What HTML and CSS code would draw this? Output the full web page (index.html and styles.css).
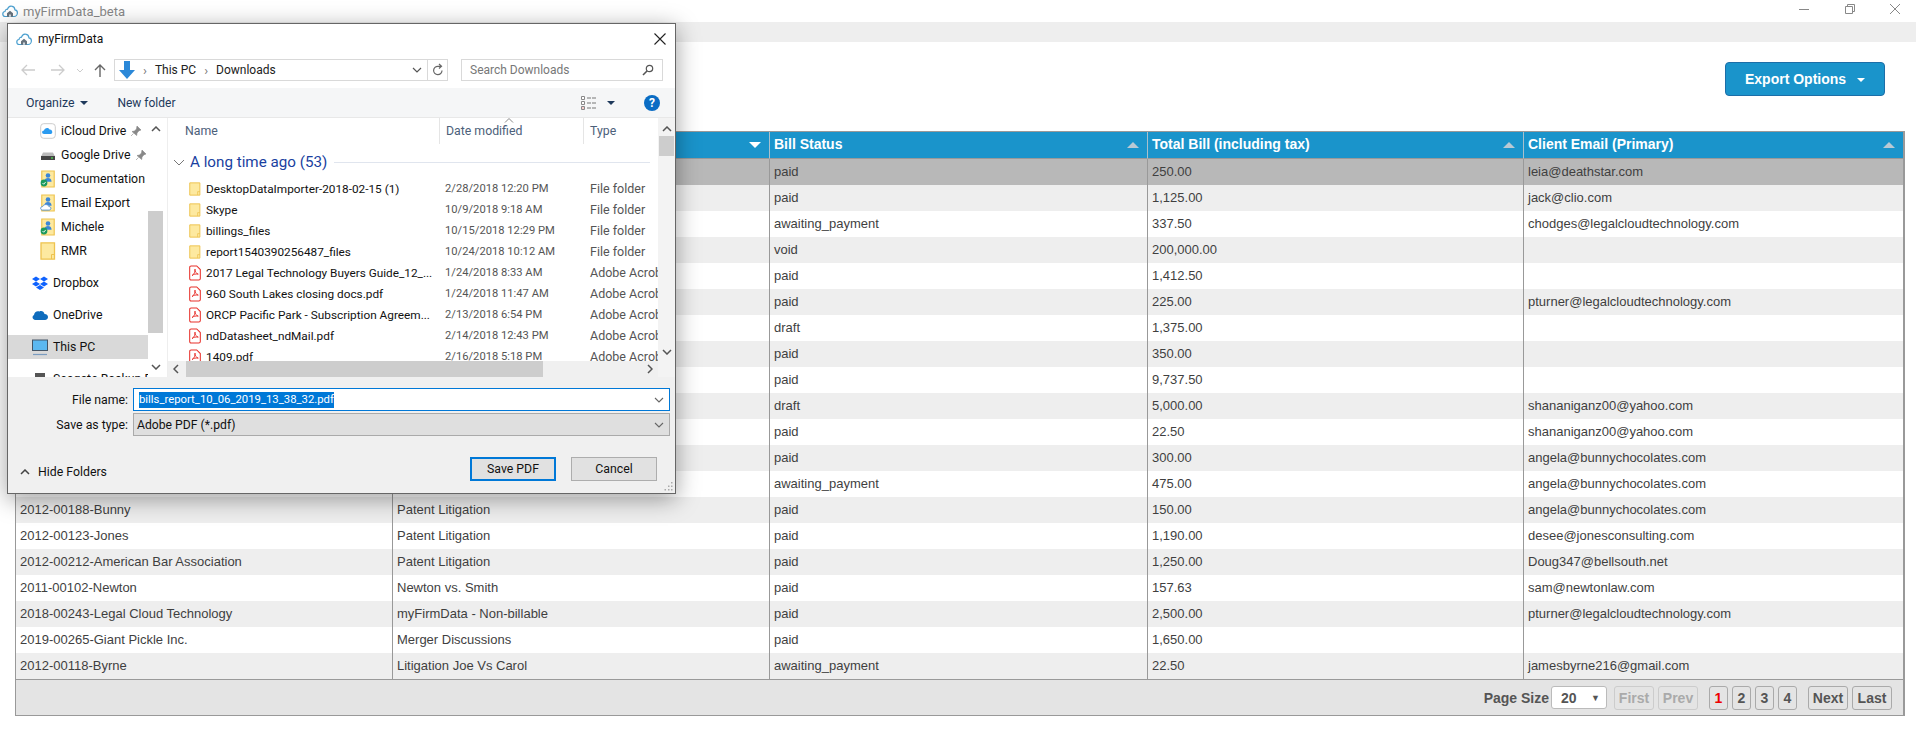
FILE: index.html
```html
<!DOCTYPE html>
<html lang="en">
<head>
<meta charset="utf-8">
<title>myFirmData_beta</title>
<link rel="stylesheet" href="styles.css">
</head>
<body>
<svg class="defs" width="0" height="0" aria-hidden="true">
  <symbol id="cloud" viewBox="0 0 16 16"><path d="M4 13.500H3.200C1.600 13.500.8 12.300.8 11s.9-2.400 2.200-2.500C3.300 6.800 4.400 6 5.500 6.200 6.200 3.900 8 2.800 9.600 3.100c2 .3 3.200 1.900 3.300 3.700 1.500.2 2.500 1.400 2.500 2.900 0 1.900-1.300 3.800-3.400 3.800H4" fill="#fff" stroke="#4a9fcf" stroke-width="1.200"/><path d="M5 10.200 8 7.800l3 2.400v3.600H5z" fill="#67727c"/><path d="M7 11.500h2v2.300H7z" fill="#cfd6dc"/></symbol>
  <symbol id="folder" viewBox="0 0 16 18"><path d="M1 .8h13.500v16.400H1z" fill="#fde9a0" stroke="#eec34f" stroke-width="1.300"/><path d="M11.500 17V12.500h3" fill="none" stroke="#eec34f"/></symbol>
  <symbol id="pdf" viewBox="0 0 14 18"><path d="M.8 2.500Q.8.800 2.500.8H9L13.200 5v10.500q0 1.700-1.700 1.700h-9q-1.700 0-1.700-1.700z" fill="#fff" stroke="#e8302a" stroke-width="1.200"/><path d="M7 4.500c-.8 2.500 1.500 5 3.800 5.800M7 4.500c.6 2.800-1 6-3.500 7.500M3.500 12c2-1.800 4.500-2 7.300-1.700" fill="none" stroke="#e8302a" stroke-width="1.100"/></symbol>
  <symbol id="sharedfolder" viewBox="0 0 18 20"><path d="M2 1h14v18H2z" fill="#fde9a0" stroke="#eec34f" stroke-width="1.300"/><circle cx="9" cy="6" r="2.600" fill="#3b86d8"/><path d="M5 13c0-3 2-4 4-4s4 1 4 4z" fill="#3b86d8"/><circle cx="4.500" cy="14.500" r="3.800" fill="#1c9a5e"/><path d="M2.800 14.500l1.400 1.400 2.200-2.600" fill="none" stroke="#fff"/></symbol>
  <symbol id="sharedcloud" viewBox="0 0 18 20"><path d="M2 1h14v18H2z" fill="#fde9a0" stroke="#eec34f" stroke-width="1.300"/><circle cx="9" cy="6" r="2.600" fill="#3b86d8"/><path d="M5 13c0-3 2-4 4-4s4 1 4 4z" fill="#3b86d8"/><path d="M3 18c-3 0-3-4 0-4 1-3 6-3 7 0 3 0 3 4 0 4z" fill="#fff" stroke="#4a8bd0"/></symbol>
</svg>

<header class="titlebar">
  <svg class="ic-16"><use href="#cloud"/></svg>
  <span class="apptitle">myFirmData_beta</span>
  <span class="winctl">
    <svg width="12" height="12" viewBox="0 0 12 12"><path d="M1 6.500h10" stroke="#888"/></svg>
    <svg width="12" height="12" viewBox="0 0 12 12"><path d="M1.500 3.500h7v7h-7zM3.500 3.500v-2h7v7h-2" fill="none" stroke="#888"/></svg>
    <svg width="12" height="12" viewBox="0 0 12 12"><path d="M1 1l10 10M11 1L1 11" stroke="#888"/></svg>
  </span>
</header>
<div class="menubar"></div>

<main class="page">
  <div class="actions">
    <button class="export">Export Options <span class="caret"></span></button>
  </div>

  <section class="grid-wrap">
    <table class="grid">
      <thead>
        <tr>
          <th>Matter</th>
          <th class="sorted">Matter Description</th>
          <th>Bill Status</th>
          <th>Total Bill (including tax)</th>
          <th>Client Email (Primary)</th>
        </tr>
      </thead>
      <tbody>
        <tr class="selected"><td></td><td></td><td>paid</td><td>250.00</td><td>leia@deathstar.com</td></tr>
        <tr><td></td><td></td><td>paid</td><td>1,125.00</td><td>jack@clio.com</td></tr>
        <tr><td></td><td></td><td>awaiting_payment</td><td>337.50</td><td>chodges@legalcloudtechnology.com</td></tr>
        <tr><td></td><td></td><td>void</td><td>200,000.00</td><td></td></tr>
        <tr><td></td><td></td><td>paid</td><td>1,412.50</td><td></td></tr>
        <tr><td></td><td></td><td>paid</td><td>225.00</td><td>pturner@legalcloudtechnology.com</td></tr>
        <tr><td></td><td></td><td>draft</td><td>1,375.00</td><td></td></tr>
        <tr><td></td><td></td><td>paid</td><td>350.00</td><td></td></tr>
        <tr><td></td><td></td><td>paid</td><td>9,737.50</td><td></td></tr>
        <tr><td></td><td></td><td>draft</td><td>5,000.00</td><td>shananiganz00@yahoo.com</td></tr>
        <tr><td></td><td></td><td>paid</td><td>22.50</td><td>shananiganz00@yahoo.com</td></tr>
        <tr><td></td><td></td><td>paid</td><td>300.00</td><td>angela@bunnychocolates.com</td></tr>
        <tr><td></td><td></td><td>awaiting_payment</td><td>475.00</td><td>angela@bunnychocolates.com</td></tr>
        <tr><td>2012-00188-Bunny</td><td>Patent Litigation</td><td>paid</td><td>150.00</td><td>angela@bunnychocolates.com</td></tr>
        <tr><td>2012-00123-Jones</td><td>Patent Litigation</td><td>paid</td><td>1,190.00</td><td>desee@jonesconsulting.com</td></tr>
        <tr><td>2012-00212-American Bar Association</td><td>Patent Litigation</td><td>paid</td><td>1,250.00</td><td>Doug347@bellsouth.net</td></tr>
        <tr><td>2011-00102-Newton</td><td>Newton vs. Smith</td><td>paid</td><td>157.63</td><td>sam@newtonlaw.com</td></tr>
        <tr><td>2018-00243-Legal Cloud Technology</td><td>myFirmData - Non-billable</td><td>paid</td><td>2,500.00</td><td>pturner@legalcloudtechnology.com</td></tr>
        <tr><td>2019-00265-Giant Pickle Inc.</td><td>Merger Discussions</td><td>paid</td><td>1,650.00</td><td></td></tr>
        <tr><td>2012-00118-Byrne</td><td>Litigation Joe Vs Carol</td><td>awaiting_payment</td><td>22.50</td><td>jamesbyrne216@gmail.com</td></tr>
      </tbody>
    </table>
    <footer class="pager">
      <span class="pager-label">Page Size</span>
      <span class="pager-select">20 <i class="pager-arrow">▼</i></span>
      <span class="pgroup">
        <span class="pbtn wide off">First</span>
        <span class="pbtn wide off">Prev</span>
      </span>
      <span class="pgroup">
        <span class="pbtn num cur">1</span>
        <span class="pbtn num">2</span>
        <span class="pbtn num">3</span>
        <span class="pbtn num">4</span>
      </span>
      <span class="pgroup">
        <span class="pbtn wide">Next</span>
        <span class="pbtn wide">Last</span>
      </span>
    </footer>
  </section>
</main>

<div class="dialog">
  <div class="dlg-title">
    <svg class="ic-16"><use href="#cloud"/></svg>
    <span class="dlg-name">myFirmData</span>
    <svg class="dlg-close" width="12" height="12" viewBox="0 0 12 12"><path d="M.5.500l11 11M11.500.500l-11 11" stroke="#222" stroke-width="1.100"/></svg>
  </div>

  <div class="dlg-nav">
    <svg class="navarrows" width="88" height="14" viewBox="0 0 88 14">
      <path d="M15 7H2M7 2 2 7l5 5" fill="none" stroke="#ccc" stroke-width="1.300"/>
      <path d="M31 7h13M39 2l5 5-5 5" fill="none" stroke="#ccc" stroke-width="1.300"/>
      <path d="M57 6l3 3 3-3" fill="none" stroke="#ccc"/>
      <path d="M80 14V2M75 7l5-5 5 5" fill="none" stroke="#666" stroke-width="1.400"/>
    </svg>
    <div class="addr">
      <svg class="addr-ic" width="16" height="20" viewBox="0 0 16 20"><path d="M5 1h6v9h5l-8 9-8-9h5z" fill="#2b88d8"/></svg>
      <span class="crumbsep">›</span><span class="crumb">This PC</span><span class="crumbsep">›</span><span class="crumb">Downloads</span>
      <span class="addr-fill"></span>
      <svg class="addr-chev" width="10" height="6" viewBox="0 0 10 6"><path d="M1 1l4 4 4-4" fill="none" stroke="#555" stroke-width="1.200"/></svg>
      <span class="addr-refresh"><svg width="12" height="14" viewBox="0 0 12 14"><path d="M10 7.500A4.200 4.200 0 1 1 6 3.300H9M7 1l2.500 2.300L7 5.500" fill="none" stroke="#666" stroke-width="1.200"/></svg></span>
    </div>
    <div class="search">
      <span>Search Downloads</span>
      <svg width="12" height="12" viewBox="0 0 12 12"><circle cx="7.500" cy="4.500" r="3.200" fill="none" stroke="#555" stroke-width="1.200"/><path d="M5 7l-4 4" stroke="#555" stroke-width="1.600"/></svg>
    </div>
  </div>

  <div class="dlg-tools">
    <span class="tool">Organize <i class="tcaret"></i></span>
    <span class="tool newf">New folder</span>
    <span class="tool-fill"></span>
    <svg width="18" height="16" viewBox="0 0 18 16"><path d="M1.500 1.500h3v3h-3zM1.500 6.500h3v3h-3zM1.500 11.500h3v3h-3z" fill="#fff" stroke="#888"/><path d="M2.500 12.500h1v1h-1z" fill="#d33"/><path d="M7 3h4M12 3h4M7 8h4M12 8h4M7 13h4M12 13h4" stroke="#777"/></svg>
    <i class="tcaret view"></i>
    <span class="help">?</span>
  </div>

  <div class="dlg-main">
    <nav class="navpane">
      <div class="navlist">
        <div class="nav l2"><svg class="ni" viewBox="0 0 16 16"><rect x=".7" y=".7" width="14.600" height="14.600" rx="3" fill="#fff" stroke="#ccc"/><path d="M4 11c-2.500 0-2.500-3.300 0-3.400C4.500 5 8 4 9.500 6.500c2.500-.5 4 3.500 1.500 4.500z" fill="#2b9bf0"/></svg><span>iCloud Drive</span><svg class="pin" width="12" height="12" viewBox="0 0 12 12"><path d="M7 1l4 4-2 .7-2 2.300-.3 2.500L2 6.500l2.500-.4L6.500 4z M3.500 8.500L1 11" fill="#888" stroke="#888" stroke-width=".6"/></svg></div>
        <div class="nav l2"><svg class="ni" viewBox="0 0 16 16"><path d="M3 5.500h10l2 4H1z" fill="#bbb"/><rect x="1" y="9" width="14" height="4" fill="#444"/><rect x="11" y="10.500" width="2" height="1" fill="#5f5"/></svg><span>Google Drive</span><svg class="pin" width="12" height="12" viewBox="0 0 12 12"><path d="M7 1l4 4-2 .7-2 2.300-.3 2.500L2 6.500l2.500-.4L6.500 4z M3.500 8.500L1 11" fill="#888" stroke="#888" stroke-width=".6"/></svg></div>
        <div class="nav l2"><svg class="ni"><use href="#sharedfolder"/></svg><span>Documentation</span></div>
        <div class="nav l2"><svg class="ni"><use href="#sharedcloud"/></svg><span>Email Export</span></div>
        <div class="nav l2"><svg class="ni"><use href="#sharedfolder"/></svg><span>Michele</span></div>
        <div class="nav l2"><svg class="ni"><use href="#folder"/></svg><span>RMR</span></div>
        <div class="nav l1 gap"><svg class="ni" viewBox="0 0 16 16"><path d="M4 1.500 8 4 4 6.500 0 4zM12 1.500 16 4l-4 2.500L8 4zM4 6.500 8 9l-4 2.500L0 9zM12 6.500 16 9l-4 2.500L8 9zM8 10l4 2.500L8 15l-4-2.500z" fill="#0f62fe"/></svg><span>Dropbox</span></div>
        <div class="nav l1 gap"><svg class="ni" viewBox="0 0 16 16"><path d="M3.500 13C.5 13-.6 9.500 2 8c.3-3 3-4.500 5.500-3.500 2-1 4.500 0 5 2.500 2.500 0 3.500 1.500 3.500 3 0 1.600-1.200 3-3 3z" fill="#0f6cbd"/></svg><span>OneDrive</span></div>
        <div class="nav l1 gap active"><svg class="ni" viewBox="0 0 16 16"><rect x=".5" y="1" width="15" height="10.500" fill="#5cb8f0" stroke="#456"/><path d="M1 15.500h14" stroke="#7a9cc0" stroke-width="1.200"/></svg><span>This PC</span></div>
        <div class="nav l1 gap"><svg class="ni" viewBox="0 0 16 16"><path d="M3 2h10v12H3z" fill="#555"/></svg><span>Seagate Backup P</span></div>
      </div>
      <div class="vbar">
        <svg class="sb-a" width="10" height="6" viewBox="0 0 10 6"><path d="M1 5l4-4 4 4" fill="none" stroke="#555" stroke-width="1.500"/></svg>
        <span class="nthumb"></span>
        <svg class="sb-a sb-end" width="10" height="6" viewBox="0 0 10 6"><path d="M1 1l4 4 4-4" fill="none" stroke="#555" stroke-width="1.500"/></svg>
      </div>
    </nav>
    <div class="paneline"></div>
    <div class="listpane">
      <div class="listarea">
        <div class="listbody">
          <div class="lhead">
            <span class="lh-name">Name</span>
            <span class="lh-date">Date modified<svg class="lh-sort" width="10" height="5" viewBox="0 0 10 5"><path d="M1 4.500l4-4 4 4" fill="none" stroke="#888"/></svg></span>
            <span class="lh-type">Type</span>
          </div>
          <div class="lgroup">
            <svg width="12" height="7" viewBox="0 0 12 7"><path d="M1 1l5 5 5-5" fill="none" stroke="#777"/></svg>
            <span class="lgroup-t">A long time ago (53)</span>
            <span class="lgroup-l"></span>
          </div>
          <div class="lrow"><svg class="fi"><use href="#folder"/></svg><span class="lname">DesktopDataImporter-2018-02-15 (1)</span><span class="ldate">2/28/2018 12:20 PM</span><span class="ltype">File folder</span></div>
          <div class="lrow"><svg class="fi"><use href="#folder"/></svg><span class="lname">Skype</span><span class="ldate">10/9/2018 9:18 AM</span><span class="ltype">File folder</span></div>
          <div class="lrow"><svg class="fi"><use href="#folder"/></svg><span class="lname">billings_files</span><span class="ldate">10/15/2018 12:29 PM</span><span class="ltype">File folder</span></div>
          <div class="lrow"><svg class="fi"><use href="#folder"/></svg><span class="lname">report1540390256487_files</span><span class="ldate">10/24/2018 10:12 AM</span><span class="ltype">File folder</span></div>
          <div class="lrow"><svg class="fi"><use href="#pdf"/></svg><span class="lname">2017 Legal Technology Buyers Guide_12_...</span><span class="ldate">1/24/2018 8:33 AM</span><span class="ltype">Adobe Acrobat</span></div>
          <div class="lrow"><svg class="fi"><use href="#pdf"/></svg><span class="lname">960 South Lakes closing docs.pdf</span><span class="ldate">1/24/2018 11:47 AM</span><span class="ltype">Adobe Acrobat</span></div>
          <div class="lrow"><svg class="fi"><use href="#pdf"/></svg><span class="lname">ORCP Pacific Park - Subscription Agreem...</span><span class="ldate">2/13/2018 6:54 PM</span><span class="ltype">Adobe Acrobat</span></div>
          <div class="lrow"><svg class="fi"><use href="#pdf"/></svg><span class="lname">ndDatasheet_ndMail.pdf</span><span class="ldate">2/14/2018 12:43 PM</span><span class="ltype">Adobe Acrobat</span></div>
          <div class="lrow"><svg class="fi"><use href="#pdf"/></svg><span class="lname">1409.pdf</span><span class="ldate">2/16/2018 5:18 PM</span><span class="ltype">Adobe Acrobat</span></div>
        </div>
        <div class="hbar">
          <svg width="6" height="10" viewBox="0 0 6 10"><path d="M5 1 1 5l4 4" fill="none" stroke="#555" stroke-width="1.500"/></svg>
          <span class="hthumb"></span>
          <svg class="sb-end-h" width="6" height="10" viewBox="0 0 6 10"><path d="M1 1l4 4-4 4" fill="none" stroke="#555" stroke-width="1.500"/></svg>
        </div>
      </div>
      <div class="vbar lv">
        <svg class="sb-a" width="10" height="6" viewBox="0 0 10 6"><path d="M1 5l4-4 4 4" fill="none" stroke="#555" stroke-width="1.500"/></svg>
        <span class="lthumb"></span>
        <svg class="sb-a sb-end" width="10" height="6" viewBox="0 0 10 6"><path d="M1 1l4 4 4-4" fill="none" stroke="#555" stroke-width="1.500"/></svg>
      </div>
    </div>
  </div>

  <div class="dlg-form">
    <div class="frow">
      <label class="flabel">File name:</label>
      <div class="finput"><span class="fsel">bills_report_10_06_2019_13_38_32.pdf</span><svg class="fchev" width="10" height="6" viewBox="0 0 10 6"><path d="M1 1l4 4 4-4" fill="none" stroke="#666" stroke-width="1.100"/></svg></div>
    </div>
    <div class="frow">
      <label class="flabel">Save as type:</label>
      <div class="fselect"><span>Adobe PDF (*.pdf)</span><svg class="fchev" width="10" height="6" viewBox="0 0 10 6"><path d="M1 1l4 4 4-4" fill="none" stroke="#666" stroke-width="1.100"/></svg></div>
    </div>
    <div class="fbuttons">
      <span class="hide"><svg width="10" height="6" viewBox="0 0 10 6"><path d="M1 5l4-4 4 4" fill="none" stroke="#444" stroke-width="1.500"/></svg>Hide Folders</span>
      <button class="wbtn primary">Save PDF</button>
      <button class="wbtn">Cancel</button>
    </div>
    <svg class="grip" width="10" height="10" viewBox="0 0 10 10"><path d="M8 1h1.500v1.500H8zM5 4.500h1.500V6H5zM8 4.500h1.500V6H8zM1.500 8H3v1.500H1.500zM5 8h1.500v1.500H5zM8 8h1.500v1.500H8z" fill="#aaa"/></svg>
  </div>
</div>
</body>
</html>
```
FILE: styles.css
```css
* { box-sizing: border-box; }
html, body { margin: 0; padding: 0; }
body { height: 731px; overflow: hidden; background: #fff; font-family: "Liberation Sans", Arial, sans-serif; position: relative; }
.defs { position: absolute; }
.ic-16 { width: 16px; height: 16px; flex: none; }

.titlebar { height: 22px; display: flex; align-items: center; padding-left: 2px; font-family: Roboto, "Noto Sans", sans-serif; }
.apptitle { font-size: 13px; color: #888; margin-left: 5px; }
.winctl { margin-left: auto; display: flex; gap: 33.500px; padding-right: 15px; padding-bottom: 4px; }
.menubar { height: 20px; background: #eee; }

.page { padding: 0 11px 0 15px; }
.actions { height: 89px; display: flex; justify-content: flex-end; align-items: flex-start; padding: 20px 20px 0 0; }
.export { width: 160px; height: 34px; border: 1px solid #1c6ea8; border-radius: 4px; background: #1a94cb; color: #fff; font: bold 14px "Liberation Sans", Arial, sans-serif; padding: 0; }
.caret { display: inline-block; width: 0; height: 0; border: 4px solid transparent; border-top-color: #fff; border-bottom: 0; margin-left: 7px; vertical-align: 2px; }

.grid-wrap { width: 100%; }
.grid { width: 100%; height: 548px; border-collapse: separate; border-spacing: 0; table-layout: fixed; border: solid #999; border-width: 1px 2px 0 1px; font-size: 13px; color: #3f3f3f; }
.grid th { height: 27px; background: #1a94cb; color: #fff; font-weight: bold; font-size: 14px; text-align: left; padding: 0 30px 2px 4px; border-right: 1px solid #a9c0cc; border-bottom: 1px solid #999; position: relative; }
.grid th:nth-child(1), .grid th:nth-child(2) { width: 377px; }
.grid th:nth-child(3) { width: 378px; }
.grid th:nth-child(4) { width: 376px; }
.grid th:last-child, .grid td:last-child { border-right: 0; }
.grid th::after { content: ""; position: absolute; right: 8px; top: 10px; border: 6px solid transparent; border-bottom: 6px solid #b9c9d4; border-top: 0; }
.grid th.sorted::after { border-bottom: 0; border-top: 6px solid #fff; }
.grid td { height: 26px; padding: 0 4px 2px; border-right: 1px solid #999; white-space: nowrap; overflow: hidden; }
.grid tbody tr:nth-child(even) { background: #eee; }
.grid tbody tr.selected { background: #b8b8b8; }
.pager { height: 37px; background: #e4e4e4; border: solid #999; border-width: 1px 2px 1px 1px; display: flex; align-items: center; justify-content: flex-end; padding-right: 11px; font-weight: bold; font-size: 14px; color: #555; }
.pager-label { margin-right: 2px; }
.pager-select { width: 56px; height: 23px; background: #fff; border: 1px solid #bbb; border-radius: 3px; display: flex; align-items: center; justify-content: space-between; padding: 0 6px 0 9px; margin-right: 7px; }
.pager-arrow { font-style: normal; font-size: 9px; }
.pgroup { display: flex; gap: 4px; margin-right: 11px; }
.pgroup:last-child { margin-right: 0; }
.pbtn { height: 24px; border: 1px solid #aaa; border-radius: 3px; display: flex; align-items: center; justify-content: center; }
.wide { width: 40px; }
.num { width: 19px; }
.off { color: #aaa; border-color: #ccc; }
.cur { color: #e00; }

.dialog { position: absolute; left: 7px; top: 23px; width: 669px; height: 471px; background: #fff; border: 1px solid #666; box-shadow: 0 5px 22px rgba(0,0,0,.38); display: flex; flex-direction: column; font-family: Roboto, "Noto Sans", sans-serif; font-size: 12px; color: #111; }
.dlg-title { height: 28px; flex: none; display: flex; align-items: center; padding-left: 8px; padding-top: 2px; }
.dlg-name { margin-left: 6px; font-size: 12px; }
.dlg-close { margin-left: auto; margin-right: 9px; }
.dlg-nav { height: 36px; flex: none; display: flex; align-items: flex-start; padding: 7px 12px 0 12px; }
.navarrows { margin-right: 6px; margin-top: 4px; flex: none; }
.addr { width: 334px; height: 22px; border: 1px solid #d9d9d9; display: flex; align-items: center; padding-left: 4px; font-size: 12px; }
.addr-ic { flex: none; }
.crumbsep { margin: 0 8px; color: #777; font-size: 13px; }
.crumb { color: #222; }
.addr-fill { flex: 1; }
.addr-chev { margin-right: 5px; }
.addr-refresh { width: 20px; height: 100%; border-left: 1px solid #d9d9d9; display: flex; align-items: center; justify-content: center; }
.search { width: 202px; height: 22px; margin-left: 13px; border: 1px solid #d9d9d9; display: flex; align-items: center; justify-content: space-between; padding: 0 8px; color: #777; }
.dlg-tools { height: 30px; flex: none; background: #f5f6f7; border-bottom: 1px solid #e8e8e8; display: flex; align-items: center; padding: 0 15px 0 18px; color: #1e395b; }
.tool { font-size: 12.300px; display: flex; align-items: center; gap: 6px; }
.newf { margin-left: 29px; font-size: 12px; }
.tool-fill { flex: 1; }
.tcaret { width: 0; height: 0; border: 4px solid transparent; border-top: 4px solid #1e395b; border-bottom: 0; display: inline-block; }
.view { margin: 0 29px 0 9px; }
.help { width: 16px; height: 16px; border-radius: 50%; background: #0a6cc4; color: #fff; font-weight: bold; font-size: 12px; display: flex; align-items: center; justify-content: center; }

.dlg-main { height: 259px; flex: none; display: flex; overflow: hidden; background: #fff; }
.navpane { width: 155px; flex: none; display: flex; }
.navlist { width: 140px; flex: none; overflow: hidden; padding-top: 1px; font-size: 12.300px; }
.nav { height: 24px; display: flex; align-items: center; white-space: nowrap; }
.l2 { padding-left: 32px; }
.l1 { padding-left: 24px; }
.gap { margin-top: 8px; }
.active { background: #d9d9d9; }
.ni { width: 16px; height: 18px; margin-right: 5px; flex: none; }
.pin { margin-left: 4px; flex: none; }
.vbar { width: 15px; flex: none; display: flex; flex-direction: column; align-items: center; padding-top: 8px; background: #f4f4f4; position: relative; }
.navpane .vbar { height: 259px; background: #fff; }
.sb-a { flex: none; }
.sb-end { position: absolute; bottom: 7px; }
.nthumb { position: absolute; top: 93px; left: 0; width: 15px; height: 122px; background: #cdcdcd; }
.paneline { width: 5px; flex: none; border-right: 1px solid #eee; margin-right: 0; }
.listpane { flex: 1; min-width: 0; display: flex; }
.listarea { flex: 1; min-width: 0; display: flex; flex-direction: column; }
.listbody { height: 243px; overflow: hidden; flex: none; }
.lhead { height: 26px; display: flex; color: #4c607a; font-size: 12.300px; align-items: stretch; }
.lhead span { display: flex; align-items: center; position: relative; }
.lh-name { width: 271px; padding-left: 17px; }
.lh-date { width: 144px; padding-left: 6px; border-left: 1px solid #e5e5e5; }
.lh-type { padding-left: 6px; border-left: 1px solid #e5e5e5; }
.lh-sort { position: absolute; left: 64px; top: 0; }
.lgroup { height: 34px; display: flex; align-items: center; padding: 2px 8px 0 5px; }
.lgroup-t { color: #1a3fa0; font-size: 15.200px; margin-left: 5px; white-space: nowrap; }
.lgroup-l { flex: 1; height: 1px; background: #e0e5ee; margin-left: 7px; }
.lrow { height: 21px; display: flex; align-items: center; white-space: nowrap; overflow: hidden; font-size: 11.800px; }
.fi { width: 12px; height: 16px; margin-left: 21px; margin-right: 5px; flex: none; }
.lname { width: 233px; flex: none; }
.ldate { width: 143px; flex: none; color: #555; padding-left: 6px; font-size: 11.200px; }
.ltype { color: #555; padding-left: 8px; font-size: 12.500px; }
.hbar { height: 16px; background: #f0f0f0; display: flex; align-items: center; padding-left: 5px; position: relative; }
.hthumb { width: 357px; height: 16px; background: #cdcdcd; margin-left: 7px; }
.sb-end-h { position: absolute; right: 5px; }
.lv { height: 259px; width: 17px; padding-top: 8px; background: #f3f3f3; }
.lthumb { position: absolute; left: 1px; top: 18px; width: 15px; height: 20px; background: #cdcdcd; }
.lv .sb-end { bottom: 22px; }

.dlg-form { flex: 1; background: #f0f0f0; padding-top: 10px; position: relative; }
.frow { display: flex; align-items: center; height: 25px; }
.flabel { width: 125px; text-align: right; padding-right: 5px; font-size: 12.300px; }
.finput, .fselect { width: 537px; height: 23px; display: flex; align-items: center; position: relative; font-size: 12.200px; }
.finput { background: #fff; border: 1px solid #0078d7; padding-left: 5px; font-size: 11.300px; }
.fselect { background: #dfdfdf; border: 1px solid #aaa; padding-left: 3px; }
.fsel { background: #0078d7; color: #fff; line-height: 16px; }
.fchev { position: absolute; right: 5px; top: 8px; }
.fbuttons { display: flex; align-items: center; margin-top: 20px; padding-right: 18px; }
.hide { display: flex; align-items: center; gap: 8px; margin-right: auto; margin-left: 12px; padding-top: 6px; font-size: 12.300px; }
.wbtn { width: 86px; height: 24px; background: #e1e1e1; border: 1px solid #adadad; font: 12.300px Roboto, "Noto Sans", sans-serif; color: #111; padding: 0; margin-left: 15px; }
.primary { border: 2px solid #0078d7; }
.grip { position: absolute; right: 2px; bottom: 2px; }
```
